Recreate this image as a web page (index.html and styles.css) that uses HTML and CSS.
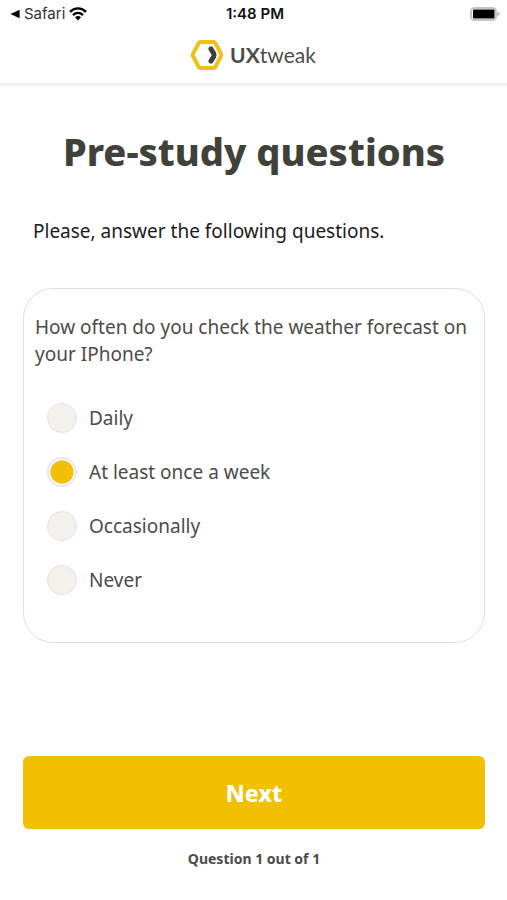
FILE: index.html
```html
<!DOCTYPE html>
<html lang="en">
<head>
<meta charset="utf-8">
<meta name="viewport" content="width=device-width, initial-scale=1">
<title>Pre-study questions</title>
<link rel="stylesheet" href="styles.css">
</head>
<body>
<div class="status">
  <a class="status-back" href="#">
    <svg class="back-arrow" viewBox="0 0 10 10" aria-hidden="true"><path d="M0.4 5 9.6 0.8V9.2Z"/></svg>
    <span>Safari</span>
    <svg class="wifi" viewBox="0 0 18 14" aria-hidden="true">
      <path class="wifi-arc" d="M1 4.9C5.500 .2 12.500 .2 17 4.900M4 8.100C6.900 5.300 11.100 5.300 14 8.100"/>
      <path d="M6 10.300C7.800 8.700 10.200 8.700 12 10.300L9 13.400Z"/>
    </svg>
  </a>
  <span class="status-time">1:48 PM</span>
  <svg class="battery" viewBox="0 0 30 14" aria-hidden="true">
    <rect class="battery-case" x="1" y="1" width="25" height="12" rx="3.500"/>
    <rect x="3" y="2.500" width="21.500" height="9" rx="1"/>
    <path class="battery-tip" d="M27.500 4.500 30 7 27.500 9.500Z"/>
  </svg>
</div>
<header class="header">
  <svg class="logo-mark" viewBox="0 0 32 30" aria-hidden="true">
    <path class="logo-hex" d="M9.500 2H22.500Q23.700 2 24.300 3L30 13.800Q30.500 15 30 16.200L24.300 27Q23.700 28 22.500 28H9.500Q8.300 28 7.700 27L2 16.200Q1.500 15 2 13.800L7.700 3Q8.300 2 9.500 2Z"/>
    <path class="logo-chevron" d="M20 9 22.700 13.500Q23.500 15 22.700 16.500L20 21"/>
  </svg>
  <span class="logo-text"><b>UX</b>tweak</span>
</header>
<main class="page">
  <h1 class="title">Pre-study questions</h1>
  <p class="intro">Please, answer the following questions.</p>
  <form class="form">
    <fieldset class="card">
      <legend class="question">How often do you check the weather forecast on your IPhone?</legend>
      <label class="option"><input type="radio" name="often" value="daily">Daily</label>
      <label class="option"><input type="radio" name="often" value="weekly" checked>At least once a week</label>
      <label class="option"><input type="radio" name="often" value="occasionally">Occasionally</label>
      <label class="option"><input type="radio" name="often" value="never">Never</label>
    </fieldset>
    <button class="next" type="button">Next</button>
  </form>
  <p class="progress">Question 1 out of 1</p>
</main>
</body>
</html>
```
FILE: styles.css
```css
* {
  box-sizing: border-box;
}

body {
  margin: 0;
  background: #fefefe;
  color: #4c4c48;
  font-family: "Noto Sans", sans-serif;
}

.status {
  display: grid;
  grid-template-columns: 1fr auto 1fr;
  align-items: center;
  height: 28px;
  padding: 0 7px 0 10px;
  color: #111;
  font: 15px/28px Inter, sans-serif;
}

.status-back {
  display: flex;
  align-items: center;
  gap: 4px;
  color: #333;
  text-decoration: none;
}

.back-arrow {
  width: 10px;
  height: 10px;
  fill: #000;
}

.wifi {
  width: 18px;
  height: 14px;
  fill: #000;
}

.wifi-arc {
  fill: none;
  stroke: #000;
  stroke-width: 2.4;
}

.status-time {
  font-weight: 600;
}

.battery {
  justify-self: end;
  width: 30px;
  height: 14px;
}

.battery-case {
  fill: #fff;
  stroke: #c4c4c4;
  stroke-width: 2;
}

.battery-tip {
  fill: #b0b0b0;
}

.header {
  display: flex;
  align-items: center;
  justify-content: center;
  gap: 7px;
  height: 58px;
  padding-bottom: 2px;
  border-bottom: 3px solid #f2f2f2;
}

.logo-mark {
  width: 32px;
  height: 30px;
  fill: none;
}

.logo-hex {
  stroke: #f0c01a;
  stroke-width: 4;
}

.logo-chevron {
  stroke: #3e3f38;
  stroke-width: 5;
  stroke-linecap: round;
}

.logo-text {
  color: #4c4d48;
  font: 21px/28px Lato, sans-serif;
}

.page {
  padding: 40px 22px 24px 23px;
}

.title {
  margin: 0;
  color: #40423a;
  font-size: 38px;
  font-weight: 800;
  line-height: 50px;
  text-align: center;
}

.intro {
  margin: 41px 10px 43px;
  color: #1c1c1c;
  font-size: 19px;
  line-height: 28px;
}

.card {
  display: flow-root;
  min-width: 0;
  margin: 0;
  padding: 25px 12px 35px 11px;
  border: 1px solid #e0e0e0;
  border-radius: 30px;
}

.question {
  float: left;
  width: 100%;
  margin-bottom: 23px;
  padding: 0;
  font-size: 19px;
  line-height: 27px;
}

.option {
  display: flex;
  clear: both;
  align-items: center;
  gap: 12px;
  height: 54px;
  padding-left: 12px;
  font-size: 19px;
}

.option input {
  flex: none;
  width: 30px;
  height: 30px;
  margin: 0;
  border: 1px solid #e3e3e1;
  border-radius: 50%;
  background: #f3f2ec;
  appearance: none;
}

.option input:checked {
  padding: 3px;
  border-color: #dededf;
  background: radial-gradient(circle, #f2c002 11px, #f4f4f6 12px);
}

.next {
  display: block;
  width: 100%;
  height: 73px;
  margin-top: 113px;
  border: 0;
  border-radius: 6px;
  background: #f2c002;
  color: #fff;
  font: 800 23px/30px "Noto Sans", sans-serif;
}

.progress {
  margin: 20px 0 0;
  font-size: 14px;
  font-weight: 700;
  line-height: 20px;
  text-align: center;
}
```
